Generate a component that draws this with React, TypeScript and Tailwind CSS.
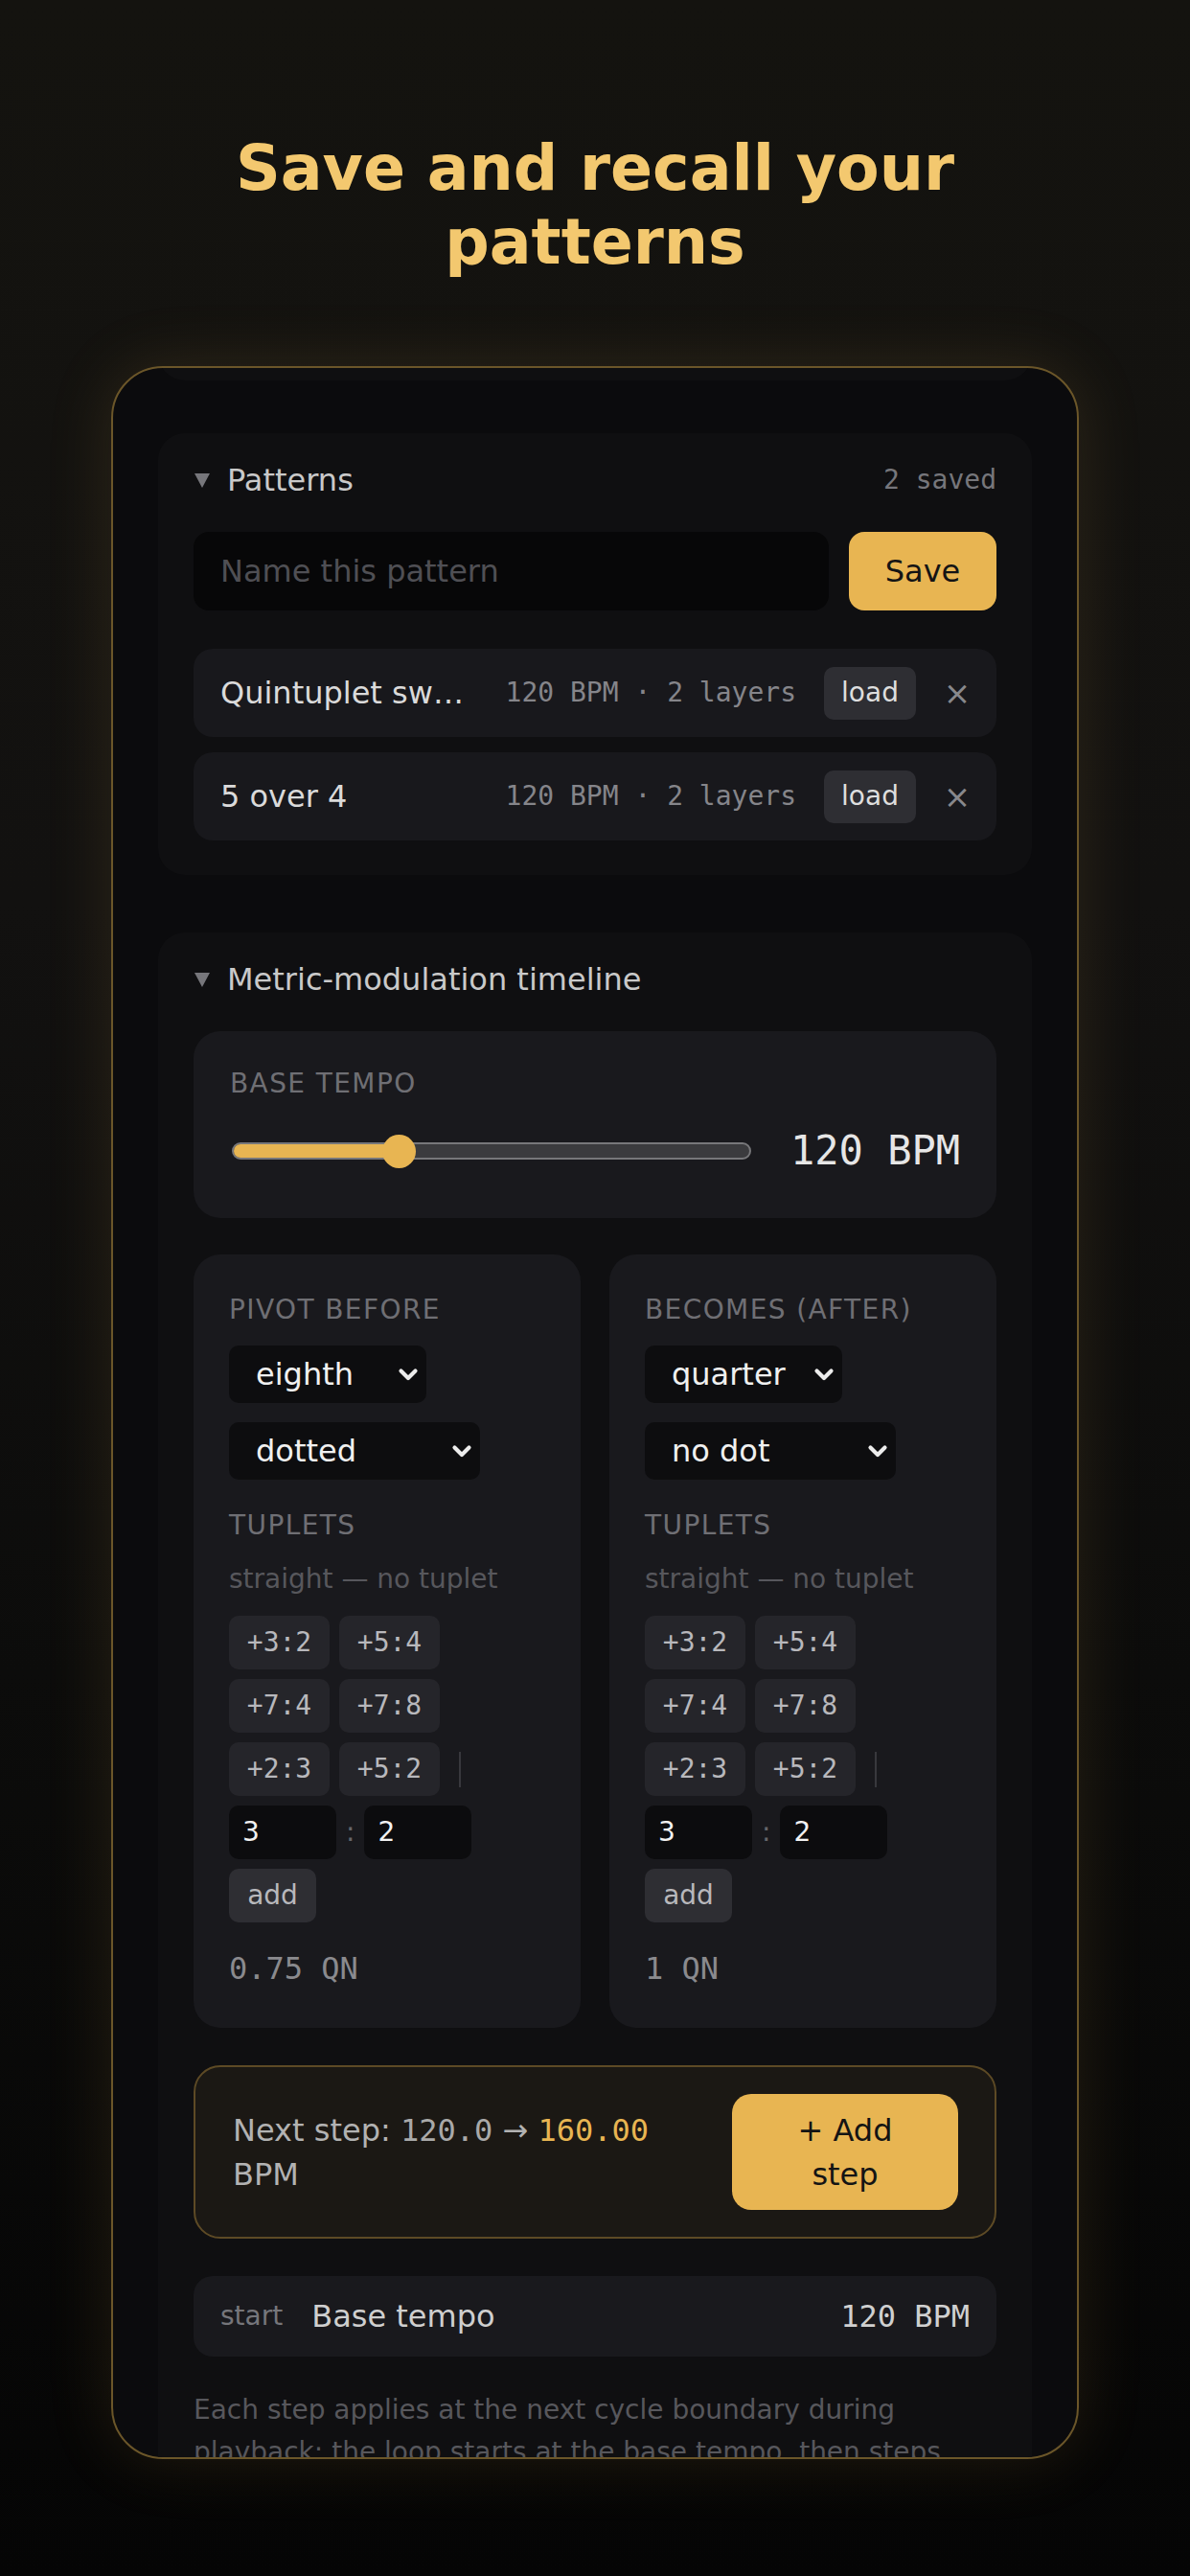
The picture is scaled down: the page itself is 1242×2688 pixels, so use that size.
import React from "react";

const MONO = "font-['DejaVu_Sans_Mono','Liberation_Mono',monospace]";

function Chevron() {
  return (
    <svg width="22" height="15" viewBox="0 0 22 15" className="shrink-0">
      <polyline points="3.5,3.5 11,11 18.5,3.5" fill="none" stroke="#ececec" strokeWidth="4.2" strokeLinecap="round" strokeLinejoin="round" />
    </svg>
  );
}

function Select({ value, wide }: { value: string; wide?: boolean }) {
  return (
    <div
      className={`mt-[20px] flex h-[60px] items-center justify-between rounded-[10px] bg-[#0d0d0f] pl-[28px] pr-[8px] ${
        wide ? "w-[262px]" : "w-[206px]"
      }`}
    >
      <span className="text-[32px] leading-[40px] text-[#f0f0f0]">{value}</span>
      <Chevron />
    </div>
  );
}

function Chip({ label }: { label: string }) {
  return (
    <div className={`flex h-[56px] w-[105px] items-center justify-center rounded-[10px] bg-[#25252a] text-[28px] text-[#b8b8bc] ${MONO}`}>
      {label}
    </div>
  );
}

function Column({ title, a, b, qn }: { title: string; a: string; b: string; qn: string }) {
  return (
    <div className="rounded-[28px] bg-[#19191d] px-[37px] pb-[42px] pt-[41px]">
      <div className="text-[28px] uppercase leading-[34px] tracking-[0.05em] text-[#6f6f74]">{title}</div>
      <Select value={a} />
      <Select value={b} wide />
      <div className="mt-[31px] text-[28px] uppercase leading-[34px] tracking-[0.05em] text-[#6f6f74]">Tuplets</div>
      <div className="mt-[22px] text-[28px] leading-[34px] text-[#57575c]">straight — no tuplet</div>
      <div className="mt-[21px] flex flex-wrap items-center gap-[10px]">
        <Chip label="+3:2" />
        <Chip label="+5:4" />
        <Chip label="+7:4" />
        <Chip label="+7:8" />
        <Chip label="+2:3" />
        <Chip label="+5:2" />
        <span className="ml-[10px] h-[37px] w-[2px] bg-[#38383d]" />
        <div className="flex items-center gap-[10px]">
          <div className="flex h-[56px] w-[112px] items-center rounded-[10px] bg-[#0c0c0e] pl-[14px] text-[28px] text-[#f2f2f2]">3</div>
          <span className="text-[28px] text-[#66666b]">:</span>
          <div className="flex h-[56px] w-[112px] items-center rounded-[10px] bg-[#0c0c0e] pl-[14px] text-[28px] text-[#f2f2f2]">2</div>
        </div>
        <div className="flex h-[56px] w-[91px] items-center justify-center rounded-[10px] bg-[#2e2e33] text-[28px] text-[#b8b8bc]">add</div>
      </div>
      <div className={`mt-[28px] text-[32px] leading-[40px] text-[#8a8a8e] ${MONO}`}>{qn}</div>
    </div>
  );
}

function Caret() {
  return (
    <svg width="18" height="16" viewBox="0 0 18 16" className="shrink-0">
      <polygon points="1,1 17,1 9,16" fill="#76767b" />
    </svg>
  );
}

function PatternRow({ name }: { name: string }) {
  return (
    <div className="flex h-[92px] items-center rounded-[20px] bg-[#18181c] pl-[28px] pr-[21px]">
      <span className="min-w-0 flex-1 truncate text-[32px] leading-[40px] text-[#dadada]">{name}</span>
      <span className={`ml-[36px] shrink-0 text-[28px] text-[#85858a] ${MONO}`}>120 BPM · 2 layers</span>
      <div className="ml-[29px] flex h-[55px] w-[96px] shrink-0 items-center justify-center rounded-[10px] bg-[#2e2e33] text-[28px] text-[#dedede]">
        load
      </div>
      <div className="ml-[23px] flex w-[40px] shrink-0 items-center justify-center text-[34px] text-[#88888c]">×</div>
    </div>
  );
}

export default function App() {
  return (
    <div className="h-[2688px] w-full overflow-hidden bg-[linear-gradient(180deg,#14130f_0%,#121110_35%,#0c0c0b_65%,#050505_100%)] font-['DejaVu_Sans','Noto_Sans',sans-serif]">
      <h1 className="pt-[137px] text-center text-[65px] font-bold leading-[77px] text-[#f3c86f]">
        Save and recall your
        <br />
        patterns
      </h1>

      <div className="mx-auto mt-[91px] h-[2184px] w-[1010px] overflow-hidden rounded-[54px] border-2 border-[#6b5629] bg-[#0b0b0d] px-[47px] shadow-[0_0_70px_rgba(232,181,82,0.13)]">
        <div className="-mt-[60px] h-[73px] rounded-[28px] bg-[#0f0f11]" />

        {/* Patterns */}
        <section className="mt-[55px] rounded-[28px] bg-[#0f0f11] px-[37px] pb-[36px] pt-[36px]">
          <div className="flex h-[26px] items-center">
            <Caret />
            <span className="ml-[17px] text-[32px] text-[#c9c9c9]">Patterns</span>
            <span className={`ml-auto text-[28px] text-[#76767b] ${MONO}`}>2 saved</span>
          </div>
          <div className="mt-[41px] flex h-[82px] gap-[21px]">
            <div className="flex flex-1 items-center rounded-[16px] bg-[#070708] px-[28px] text-[32px] text-[#4f4f54]">
              Name this pattern
            </div>
            <div className="flex w-[154px] items-center justify-center rounded-[16px] bg-[#e8b552] text-[32px] text-[#141414]">
              Save
            </div>
          </div>
          <div className="mt-[40px] flex flex-col gap-[16px]">
            <PatternRow name="Quintuplet swing" />
            <PatternRow name="5 over 4" />
          </div>
        </section>

        {/* Metric modulation */}
        <section className="mt-[60px] rounded-[28px] bg-[#0f0f11] px-[37px] pb-[60px] pt-[36px]">
          <div className="flex h-[26px] items-center">
            <Caret />
            <span className="ml-[17px] text-[32px] text-[#c9c9c9]">Metric-modulation timeline</span>
          </div>

          <div className="mt-[41px] h-[195px] rounded-[28px] bg-[#19191d] px-[38px] pt-[38px]">
            <div className="text-[28px] uppercase leading-[34px] tracking-[0.05em] text-[#6f6f74]">Base tempo</div>
            <div className="mt-[31px] flex h-[44px] items-center">
              <div className="relative ml-[2px] h-[18px] flex-1 rounded-full border-2 border-[#77777a] bg-[#3b3b3e]">
                <div className="absolute bottom-0 left-0 top-0 w-[172px] rounded-l-full bg-[#e8b552]" />
                <div className="absolute left-[155px] top-[-10px] h-[35px] w-[35px] rounded-full bg-[#e8b552]" />
              </div>
              <span className={`ml-[41px] text-[42px] leading-[44px] text-[#e6e6e6] ${MONO}`}>120 BPM</span>
            </div>
          </div>

          <div className="mt-[38px] grid grid-cols-2 gap-[30px]">
            <Column title="Pivot before" a="eighth" b="dotted" qn="0.75 QN" />
            <Column title="Becomes (after)" a="quarter" b="no dot" qn="1 QN" />
          </div>

          <div className="mt-[39px] flex h-[181px] items-center gap-[24px] rounded-[28px] border-2 border-[#5d4a25] bg-[#1b1814] pl-[39px] pr-[38px]">
            <div className="min-w-0 flex-1 text-[32px] leading-[46px] text-[#b2b2b2]">
              Next step: <span className={`text-[#a9a9a9] ${MONO}`}>120.0</span> →{" "}
              <span className={`text-[#e8b552] ${MONO}`}>160.00</span> BPM
            </div>
            <div className="flex h-[121px] w-[236px] shrink-0 items-center justify-center rounded-[20px] bg-[#e8b552] px-[36px] text-center text-[32px] leading-[46px] text-[#141414]">
              + Add step
            </div>
          </div>

          <div className="mt-[39px] flex h-[84px] items-center rounded-[20px] bg-[#19191d] px-[28px]">
            <span className="text-[28px] text-[#76767b]">start</span>
            <span className="ml-[30px] text-[32px] text-[#cfcfcf]">Base tempo</span>
            <span className={`ml-auto text-[32px] text-[#d0d0d0] ${MONO}`}>120 BPM</span>
          </div>

          <p className="mt-[34px] text-[28px] leading-[44px] text-[#57575c]">
            Each step applies at the next cycle boundary during playback: the loop starts at the base tempo, then steps
            through each modulation in order.
          </p>
        </section>
      </div>
    </div>
  );
}
